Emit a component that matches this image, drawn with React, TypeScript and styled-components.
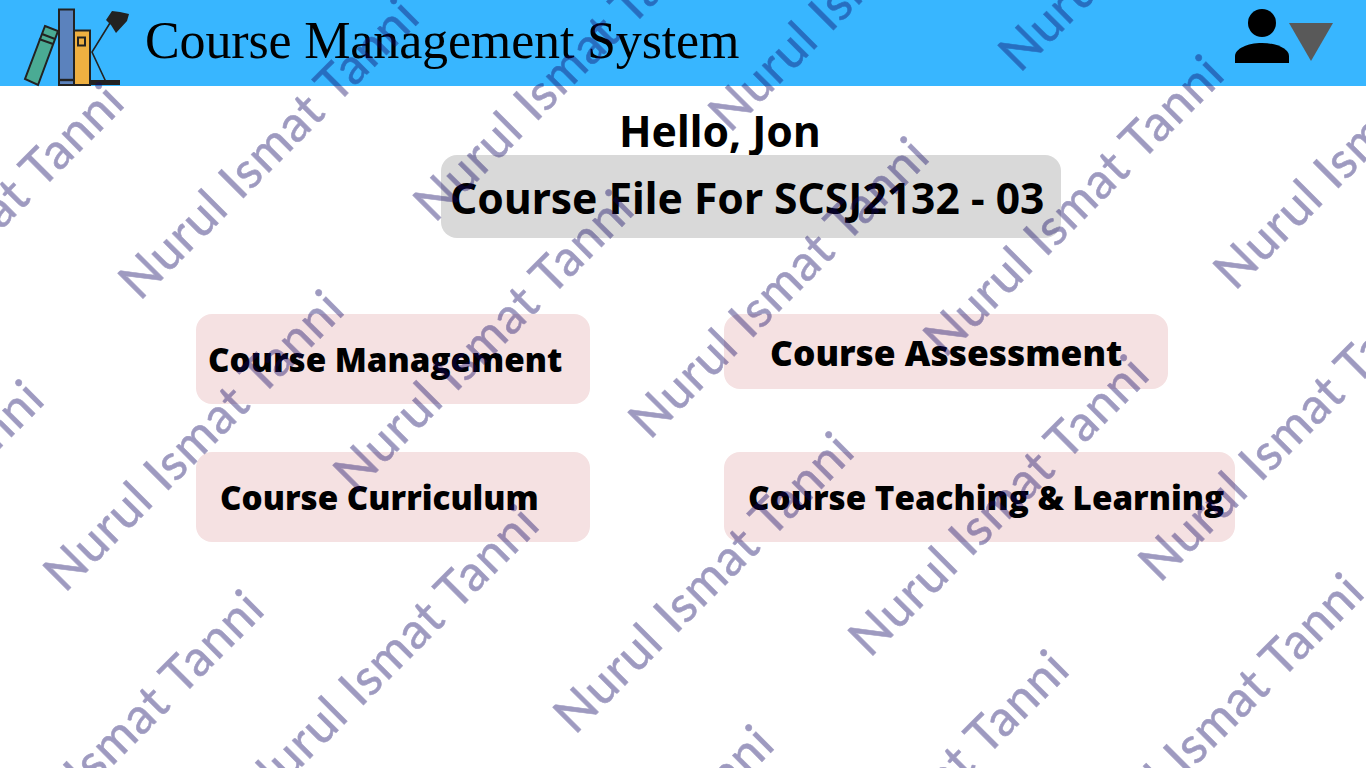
import React from "react";
import styled, { createGlobalStyle } from "styled-components";

const GlobalStyle = createGlobalStyle`
  html, body {
    margin: 0;
    padding: 0;
    background: #ffffff;
    overflow: hidden;
  }
`;

const Page = styled.div`
  position: relative;
  width: 1366px;
  height: 768px;
  overflow: hidden;
  background: #ffffff;
  font-family: "Noto Sans", "Open Sans", sans-serif;
  color: #000000;
`;

const Header = styled.header`
  display: flex;
  align-items: center;
  height: 86px;
  padding: 0 33px 0 20px;
  box-sizing: border-box;
  background: #38b6ff;
`;

const Logo = styled.svg`
  width: 110px;
  height: 90px;
  flex: none;
  align-self: flex-start;
`;

const AppTitle = styled.h1`
  margin: 0 0 4px 15px;
  font-family: "Liberation Serif", serif;
  font-size: 52px;
  font-weight: 400;
  line-height: 1;
  letter-spacing: -0.15px;
  white-space: nowrap;
`;

const UserMenu = styled.div`
  display: flex;
  align-items: flex-start;
  align-self: flex-start;
  margin: 9px 0 0 auto;
`;

const UserIcon = styled.svg`
  width: 54px;
  height: 54px;
  flex: none;
`;

const CaretIcon = styled.svg`
  width: 44px;
  height: 38px;
  margin-top: 14px;
  flex: none;
`;

const Main = styled.main`
  display: flex;
  flex-direction: column;
`;

const Greeting = styled.h2`
  align-self: flex-start;
  margin: 20px 0 0 619px;
  font-size: 42.6px;
  font-weight: 700;
  line-height: 49px;
`;

const CourseFile = styled.div`
  display: flex;
  align-items: center;
  align-self: flex-start;
  width: 620px;
  height: 83px;
  margin-left: 441px;
  padding-left: 9px;
  box-sizing: border-box;
  border-radius: 16px;
  background: #d9d9d9;
  font-size: 42.6px;
  font-weight: 700;
  white-space: nowrap;
`;

const MenuGrid = styled.nav`
  display: grid;
  grid-template-columns: 394px 511px;
  grid-auto-rows: 90px;
  column-gap: 134px;
  row-gap: 48px;
  align-items: start;
  margin: 76px 0 0 196px;
`;

const MenuCard = styled.a<{ $width: number; $height: number; $indent: number; $size: number }>`
  display: flex;
  align-items: center;
  width: ${(p) => p.$width}px;
  height: ${(p) => p.$height}px;
  padding-left: ${(p) => p.$indent}px;
  box-sizing: border-box;
  border-radius: 16px;
  background: #f5e1e2;
  color: #000000;
  font-family: "Open Sans", "Noto Sans", sans-serif;
  font-size: ${(p) => p.$size}px;
  font-weight: 800;
  white-space: nowrap;
`;

const Watermark = styled.span<{ $x: number; $y: number }>`
  position: absolute;
  left: ${(p) => p.$x + 24}px;
  top: ${(p) => p.$y - 37}px;
  height: 50px;
  font-family: "Lato", sans-serif;
  font-size: 50px;
  font-weight: 400;
  line-height: 50px;
  letter-spacing: 1px;
  white-space: nowrap;
  color: rgb(15, 5, 100);
  -webkit-text-stroke: 0.6px rgb(15, 5, 100);
  opacity: 0.4;
  transform: rotate(-45deg);
  transform-origin: 0 100%;
  pointer-events: none;
`;

const menuItems = [
  { label: "Course Management", width: 394, height: 90, indent: 12, size: 33.2 },
  { label: "Course Assessment", width: 444, height: 75, indent: 46, size: 35.3 },
  { label: "Course Curriculum", width: 394, height: 90, indent: 24, size: 33.2 },
  { label: "Course Teaching & Learning", width: 511, height: 90, indent: 24, size: 33.2 },
];

// baseline start of each rotated stamp
const stamps = [
  [-175, 378], [-255, 675], [-35, 885], [45, 585], [120, 293], [240, 800],
  [335, 485], [415, 215], [475, 1020], [555, 727], [630, 432], [710, 125],
  [770, 945], [850, 650], [925, 350], [1000, 65], [1065, 868], [1140, 575],
  [1215, 283],
];

export default function App() {
  return (
    <Page>
      <GlobalStyle />
      <Header>
        <Logo viewBox="0 0 110 90">
          <g stroke="#222222" strokeWidth="2">
            <polygon points="25,26 38,31 18,85 5,79" fill="#4aab94" />
            <line x1="22" y1="34" x2="35" y2="39" />
            <line x1="19" y1="39" x2="33" y2="44" />
            <rect x="39" y="9.5" width="15" height="75.5" fill="#5b82bd" />
            <line x1="39" y1="80" x2="54" y2="80" strokeWidth="2.4" />
            <rect x="54" y="30.5" width="16" height="54.5" fill="#efb041" />
            <rect x="58" y="37.5" width="7" height="8" fill="none" />
            <polyline points="90,23 72,52 86,82" fill="none" strokeWidth="1.6" />
          </g>
          <rect x="70" y="80" width="30" height="5" fill="#222222" />
          <polygon points="86,20 92,11 100,12 109,14 107,21 96,33 91,25" fill="#222222" />
        </Logo>
        <AppTitle>Course Management System</AppTitle>
        <UserMenu>
          <UserIcon viewBox="0 0 54 54">
            <circle cx="27" cy="14" r="14" fill="#000000" />
            <path d="M0 54 V47 C0 40 12 34 27 34 S54 40 54 47 V54 Z" fill="#000000" />
          </UserIcon>
          <CaretIcon viewBox="0 0 44 38">
            <polygon points="0,0 44,0 22,38" fill="#595959" />
          </CaretIcon>
        </UserMenu>
      </Header>
      <Main>
        <Greeting>Hello, Jon</Greeting>
        <CourseFile>Course File For SCSJ2132 - 03</CourseFile>
        <MenuGrid>
          {menuItems.map((item) => (
            <MenuCard
              key={item.label}
              $width={item.width}
              $height={item.height}
              $indent={item.indent}
              $size={item.size}
            >
              {item.label}
            </MenuCard>
          ))}
        </MenuGrid>
      </Main>
      {stamps.map(([x, y]) => (
        <Watermark key={`${x}-${y}`} $x={x} $y={y}>
          Nurul Ismat Tanni
        </Watermark>
      ))}
    </Page>
  );
}
